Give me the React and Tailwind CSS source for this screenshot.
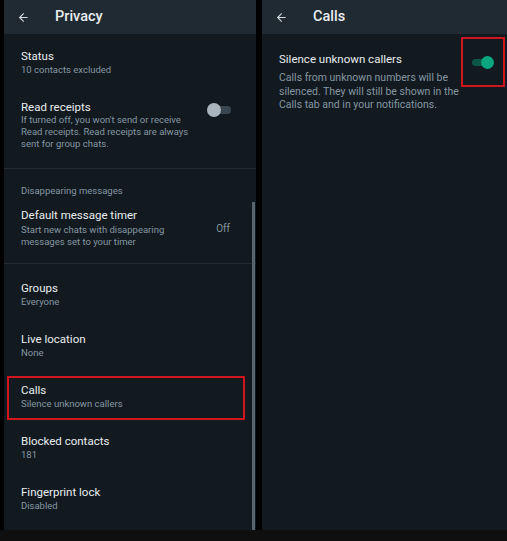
import React from "react";
import { ArrowLeft } from "lucide-react";

const Row = ({ title, sub }) => (
  <div className="h-[51px] pl-[17px] pt-[7px]">
    <p className="text-[11.5px] leading-[14px] text-[#e9edef]">{title}</p>
    <p className="text-[9.5px] leading-[14px] text-[#8696a0]">{sub}</p>
  </div>
);

const Header = ({ title, arrowPad, titlePad }) => (
  <div className="h-[34px] bg-[#1f2a32] flex items-center">
    <div className={arrowPad}>
      <ArrowLeft size={13} strokeWidth={2} className="text-[#d1d7db]" />
    </div>
    <h1 className={`${titlePad} text-[14.5px] font-medium text-[#e9edef]`}>{title}</h1>
  </div>
);

export default function App() {
  return (
    <div className="w-[507px] h-[541px] bg-[#0f0f10] font-['Roboto',sans-serif] flex flex-col">
      <div className="flex h-[530px] bg-black">
        {/* Privacy panel */}
        <div className="relative ml-[4px] w-[252px] bg-[#121a20] flex flex-col">
          <Header title="Privacy" arrowPad="pl-[13px]" titlePad="pl-[25px]" />

          <div className="pl-[17px] pt-[15px]">
            <p className="text-[11.5px] leading-[14px] text-[#e9edef]">Status</p>
            <p className="text-[9.5px] leading-[14px] text-[#8696a0]">10 contacts excluded</p>
          </div>

          <div className="flex pl-[17px] pt-[23px] pb-[18px]">
            <div className="flex-1">
              <p className="text-[11.5px] leading-[14px] text-[#e9edef]">Read receipts</p>
              <p className="text-[9.5px] leading-[12px] text-[#8696a0]">
                If turned off, you won't send or receive
                <br />
                Read receipts. Read receipts are always
                <br />
                sent for group chats.
              </p>
            </div>
            <div className="relative w-[25px] h-[14px] mt-[3px] mr-[24px]">
              <div className="absolute left-[7px] top-[3px] w-[17px] h-[8px] rounded-full bg-[#3a4650]" />
              <div className="absolute left-0 top-0 w-[14px] h-[14px] rounded-full bg-[#aab4bc]" />
            </div>
          </div>

          <div className="h-px bg-[#222c33]" />

          <p className="pl-[17px] pt-[15px] text-[9.5px] leading-[14px] text-[#8696a0]">
            Disappearing messages
          </p>

          <div className="flex pl-[17px] pt-[10px] pb-[15px]">
            <div className="flex-1">
              <p className="text-[11.5px] leading-[14px] text-[#e9edef]">Default message timer</p>
              <p className="pt-[2px] text-[9.5px] leading-[12px] text-[#8696a0]">
                Start new chats with disappearing
                <br />
                messages set to your timer
              </p>
            </div>
            <p className="pt-[14px] pr-[26px] text-[10px] leading-[14px] text-[#8696a0]">Off</p>
          </div>

          <div className="h-px bg-[#222c33]" />

          <div className="pt-[10px]">
            <Row title="Groups" sub="Everyone" />
            <Row title="Live location" sub="None" />
            <div className="h-[51px]">
              <div className="ml-[3px] mr-[11px] h-[44px] border-2 border-[#d0161c] pl-[12px] pt-[5px]">
                <p className="text-[11.5px] leading-[14px] text-[#e9edef]">Calls</p>
                <p className="text-[9.5px] leading-[14px] text-[#8696a0]">Silence unknown callers</p>
              </div>
            </div>
            <Row title="Blocked contacts" sub="181" />
            <Row title="Fingerprint lock" sub="Disabled" />
          </div>

          <div className="absolute right-[1px] top-[202px] bottom-0 w-[3px] bg-[#56646e]" />
        </div>

        {/* Calls panel */}
        <div className="ml-[6px] flex-1 bg-[#121a20] flex flex-col">
          <Header title="Calls" arrowPad="pl-[13px]" titlePad="pl-[25px]" />
          <div className="flex pt-[18px]">
            <div className="flex-1 pl-[17px]">
              <p className="text-[11.5px] leading-[14px] text-[#e9edef]">Silence unknown callers</p>
              <p className="pt-[5px] text-[10.5px] leading-[13.5px] text-[#8696a0]">
                Calls from unknown numbers will be
                <br />
                silenced. They will still be shown in the
                <br />
                Calls tab and in your notifications.
              </p>
            </div>
            <div className="-mt-[15px] mr-[2px] w-[44px] h-[50px] border-2 border-[#d0161c] flex items-center justify-center">
              <div className="relative w-[22px] h-[13px]">
                <div className="absolute left-0 top-[3px] w-[18px] h-[7px] rounded-full bg-[#0c5644]" />
                <div className="absolute right-0 top-0 w-[13px] h-[13px] rounded-full bg-[#0aa67f]" />
              </div>
            </div>
          </div>
        </div>
      </div>
    </div>
  );
}
